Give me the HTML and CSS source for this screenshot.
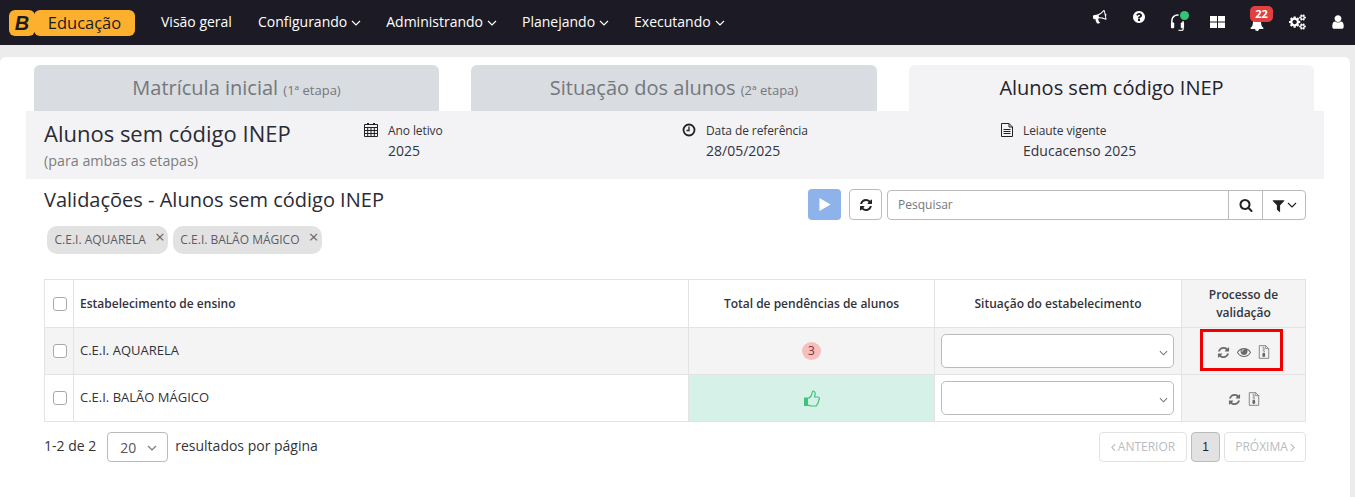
FILE: index.html
```html
<!DOCTYPE html>
<html lang="pt-BR">
<head>
<meta charset="utf-8">
<title>Alunos sem código INEP</title>
<link rel="stylesheet" href="styles.css">
</head>
<body>
<svg class="defs" xmlns="http://www.w3.org/2000/svg">
  <symbol id="i-refresh" viewBox="0 0 1792 1792"><path d="M1639 1056q0 5-1 7-64 268-268 434.500t-478 166.500q-146 0-282.500-55t-243.500-157l-129 129q-19 19-45 19t-45-19-19-45v-448q0-26 19-45t45-19h448q26 0 45 19t19 45-19 45l-137 137q71 66 161 102t187 36q134 0 250-65t186-179q11-17 53-117 8-23 30-23h192q13 0 22.500 9.500t9.500 22.500zm25-800v448q0 26-19 45t-45 19h-448q-26 0-45-19t-19-45 19-45l138-138q-148-137-349-137-134 0-250 65t-186 179q-11 17-53 117-8 23-30 23h-199q-13 0-22.500-9.500t-9.500-22.500v-7q65-268 270-434.500t480-166.500q146 0 284 55.500t245 156.500l130-129q19-19 45-19t45 19 19 45z"/></symbol>
  <symbol id="i-zip" viewBox="0 0 14 16"><path fill="none" stroke="currentColor" stroke-width=".9" d="M1.500 .6h7.500l3.500 3.500v11.300h-11z"/><path fill="none" stroke="currentColor" stroke-width=".8" d="M9 .6v3.500h3.500"/><path d="M5.500 2h1.200v1h-1.200zM6.800 3h1.200v1h-1.200zM5.500 4h1.200v1h-1.200zM6.800 5h1.200v1h-1.200zM5.500 6h1.200v1h-1.200zM6.800 7h1.200v1h-1.200zM5.500 9h2.500l.5 3.500a1.800 1.800 0 0 1-3.500 0z"/></symbol>
  <symbol id="i-chev" viewBox="0 0 10 6"><path fill="none" stroke="currentColor" stroke-width="1.200" d="M1 1l4 4 4-4"/></symbol>
  <symbol id="i-left" viewBox="0 0 6 10"><path fill="none" stroke="currentColor" stroke-width="1.300" d="M5 1L1 5l4 4"/></symbol>
  <symbol id="i-right" viewBox="0 0 6 10"><path fill="none" stroke="currentColor" stroke-width="1.300" d="M1 1l4 4-4 4"/></symbol>
</svg>

<header class="navbar">
  <div class="logo"><span class="logo-b">B</span><span class="logo-name">Educação</span></div>
  <nav class="menu">
    <a class="menu-item first">Visão geral</a>
    <a class="menu-item">Configurando <svg class="caret"><use href="#i-chev"/></svg></a>
    <a class="menu-item">Administrando <svg class="caret"><use href="#i-chev"/></svg></a>
    <a class="menu-item">Planejando <svg class="caret"><use href="#i-chev"/></svg></a>
    <a class="menu-item">Executando <svg class="caret"><use href="#i-chev"/></svg></a>
  </nav>
  <div class="tools">
    <span class="tool t-horn"><svg viewBox="0 0 1792 1792" class="ic14 tilt"><path d="M1664 640q53 0 90.500 37.500t37.500 90.500-37.500 90.500-90.500 37.500v384q0 52-38 90t-90 38q-417-347-812-380-58 19-91 66t-31 100.500 40 92.500q-20 33-23 65.500t6 58 33.500 55 48 50 61.500 50.500q-29 58-111.500 83t-168.500 11.500-132-55.500q-7-23-29.500-87.500t-32-94.500-23-89-15-101 3.500-98.500 22-110.500h-122q-66 0-113-47t-47-113v-192q0-66 47-113t113-47h480q435 0 896-384 52 0 90 38t38 90v384zm-128 604v-954q-394 302-768 343v270q377 42 768 341z"/></svg></span>
    <span class="tool t-help"><svg viewBox="0 0 1792 1792" class="ic14"><path d="M1024 1376v-192q0-14-9-23t-23-9h-192q-14 0-23 9t-9 23v192q0 14 9 23t23 9h192q14 0 23-9t9-23zm256-672q0-88-55.500-163t-138.500-116-170-41q-243 0-371 213-15 24 8 42l132 100q7 6 19 6 16 0 25-12 53-68 86-92 34-24 86-24 48 0 85.500 26t37.500 59q0 38-20 61t-68 45q-63 28-115.500 86.500t-52.500 125.500v36q0 14 9 23t23 9h192q14 0 23-9t9-23q0-19 21.500-49.500t54.500-49.500q32-18 49-28.500t46-35 44.500-48 28-60.500 12.500-81zm384 192q0 209-103 385.500t-279.500 279.500-385.500 103-385.500-103-279.500-279.500-103-385.500 103-385.500 279.500-279.500 385.500-103 385.500 103 279.500 279.500 103 385.500z"/></svg></span>
    <span class="tool t-head"><svg viewBox="0 0 16 18" class="headset"><path fill="none" stroke="#fff" stroke-width="1.600" d="M2 10V7a6 6 0 0 1 12 0v3"/><rect x="1" y="9" width="3.500" height="6" rx="1" fill="#fff"/><rect x="11.500" y="9" width="3.500" height="6" rx="1" fill="#fff"/><path fill="none" stroke="#ddd" stroke-width="1.600" d="M14 14v2a1.500 1.500 0 0 1-1.500 1.500h-3.500"/></svg><i class="dot"></i></span>
    <span class="tool t-grid"><svg viewBox="0 0 15 12" class="grid"><path fill="#fff" d="M0 0h7v5.500H0zM8 0h7v5.500H8zM0 6.500h7V12H0zM8 6.500h7V12H8z"/></svg></span>
    <span class="tool t-bell"><svg viewBox="0 0 1792 1792" class="ic14"><path d="M912 1696q0-16-16-16-59 0-101.500-42.500t-42.500-101.500q0-16-16-16t-16 16q0 73 51.500 124.500t124.500 51.500q16 0 16-16zm816-288q0 52-38 90t-90 38h-448q0 106-75 181t-181 75-181-75-75-181h-448q-52 0-90-38t-38-90q50-42 91-88t85-119.500 74.500-158.500 50-206 19.500-260q0-152 117-282.500t307-158.500q-8-19-8-39 0-40 28-68t68-28 68 28 28 68q0 20-8 39 190 28 307 158.500t117 282.500q0 139 19.500 260t50 206 74.500 158.500 85 119.500 91 88z"/></svg><b class="count">22</b></span>
    <span class="tool t-cogs"><svg viewBox="0 0 2048 1792" class="cogs"><path d="M896 896q0-106-75-181t-181-75-181 75-75 181 75 181 181 75 181-75 75-181zm768 512q0-52-38-90t-90-38-90 38-38 90q0 53 37.500 90.500t90.500 37.500 90.500-37.500 37.500-90.500zm0-1024q0-52-38-90t-90-38-90 38-38 90q0 53 37.500 90.500t90.500 37.500 90.500-37.500 37.500-90.500zm-384 421v185q0 10-7 19.500t-16 10.500l-155 24q-11 35-32 76 34 48 90 115 7 11 7 20 0 12-7 19-23 30-82.500 89.500t-78.500 59.500q-11 0-21-7l-115-90q-37 19-77 31-11 108-23 155-7 24-30 24h-186q-11 0-20-7.500t-10-17.500l-23-153q-34-10-75-31l-118 89q-7 7-20 7-11 0-21-8-144-133-144-160 0-9 7-19 10-14 41-53t47-61q-23-44-35-82l-152-24q-10-1-17-9.500t-7-19.500v-185q0-10 7-19.500t16-10.500l155-24q11-35 32-76-34-48-90-115-7-11-7-20 0-12 7-20 22-30 82-89t79-59q11 0 21 7l115 90q34-18 77-32 11-108 23-154 7-24 30-24h186q11 0 20 7.500t10 17.500l23 153q34 10 75 31l118-89q8-7 20-7 11 0 21 8 144 133 144 160 0 8-7 19-12 16-42 54t-45 60q23 48 34 82l152 23q10 2 17 10.500t7 19.500zm640 533v140q0 16-149 31-12 27-30 52 51 113 51 138 0 4-4 7-122 71-124 71-8 0-46-47t-52-68q-20 2-30 2t-30-2q-14 21-52 68t-46 47q-2 0-124-71-4-3-4-7 0-25 51-138-18-25-30-52-149-15-149-31v-140q0-16 149-31 13-29 30-52-51-113-51-138 0-4 4-7 4-2 35-20t59-34 30-16q8 0 46 46.500t52 67.500q20-2 30-2t30 2q51-71 92-112l6-2q4 0 124 70 4 3 4 7 0 25-51 138 17 23 30 52 149 15 149 31zm0-1024v140q0 16-149 31-12 27-30 52 51 113 51 138 0 4-4 7-122 71-124 71-8 0-46-47t-52-68q-20 2-30 2t-30-2q-14 21-52 68t-46 47q-2 0-124-71-4-3-4-7 0-25 51-138-18-25-30-52-149-15-149-31v-140q0-16 149-31 13-29 30-52-51-113-51-138 0-4 4-7 4-2 35-20t59-34 30-16q8 0 46 46.500t52 67.500q20-2 30-2t30 2q51-71 92-112l6-2q4 0 124 70 4 3 4 7 0 25-51 138 17 23 30 52 149 15 149 31z"/></svg></span>
    <span class="tool t-user"><svg viewBox="0 0 1792 1792" class="user"><path d="M1536 1399q0 109-62.500 187t-150.500 78h-854q-88 0-150.500-78t-62.500-187q0-85 8.500-160.500t31.500-152 58.500-131 94-89 134.500-34.500q131 128 313 128t313-128q76 0 134.500 34.500t94 89 58.500 131 31.500 152 8.500 160.500zm-256-887q0 159-112.500 271.500t-271.500 112.500-271.500-112.500-112.500-271.500 112.500-271.500 271.500-112.500 271.500 112.500 112.500 271.500z"/></svg></span>
  </div>
</header>

<main class="card">
  <div class="tabs">
    <div class="tab">Matrícula inicial <small>(1ª etapa)</small></div>
    <div class="tab wide">Situação dos alunos <small>(2ª etapa)</small></div>
    <div class="tab active">Alunos sem código INEP</div>
  </div>

  <section class="band">
    <div class="band-title">
      <h1>Alunos sem código INEP</h1>
      <p>(para ambas as etapas)</p>
    </div>
    <div class="meta m1">
      <svg viewBox="0 0 14 14" class="meta-ic"><path d="M3 0h2v2H3zM9 0h2v2H9z"/><path fill="none" stroke="currentColor" d="M.5 1.500h13v12H.5zM.5 4.500h13M.5 7.500h13M.5 10.500h13M3.700 4.500v9M7 4.500v9M10.300 4.500v9"/></svg>
      <div><span class="meta-label">Ano letivo</span><span class="meta-value">2025</span></div>
    </div>
    <div class="meta m2">
      <svg viewBox="0 0 14 14" class="meta-ic"><circle cx="7" cy="7" r="5.500" fill="none" stroke="currentColor" stroke-width="1.800"/><path fill="none" stroke="currentColor" stroke-width="1.300" d="M7 3.500V7.500H4.500"/></svg>
      <div><span class="meta-label">Data de referência</span><span class="meta-value">28/05/2025</span></div>
    </div>
    <div class="meta m3">
      <svg viewBox="0 0 12 14" class="meta-ic"><path fill="none" stroke="currentColor" d="M.5.500h7.500l3.500 3.500v9.500H.5zM8 .5V4h3.500M2.500 6.500h7M2.500 8.500h7M2.500 10.500h7"/></svg>
      <div><span class="meta-label">Leiaute vigente</span><span class="meta-value">Educacenso 2025</span></div>
    </div>
  </section>

  <section class="content">
    <div class="head-row">
      <div class="head-left">
        <h2>Validações - Alunos sem código INEP</h2>
        <div class="chips">
          <span class="chip">C.E.I. AQUARELA<i class="chip-x">×</i></span>
          <span class="chip">C.E.I. BALÃO MÁGICO<i class="chip-x">×</i></span>
        </div>
      </div>
      <div class="actions">
        <button class="btn-play"><svg viewBox="0 0 12 14" class="play"><path fill="#fff" d="M0 0l12 7-12 7z"/></svg></button>
        <button class="btn-sync"><svg class="ic14"><use href="#i-refresh"/></svg></button>
        <div class="search">
          <span class="search-input">Pesquisar</span>
          <span class="search-btn"><svg viewBox="0 0 1792 1792" class="ic14"><path d="M1216 832q0-185-131.500-316.500t-316.500-131.500-316.500 131.500-131.500 316.500 131.500 316.500 316.500 131.500 316.500-131.500 131.500-316.500zm512 832q0 52-38 90t-90 38q-54 0-90-38l-343-342q-179 124-399 124-143 0-273.500-55.500t-225-150-150-225-55.500-273.500 55.500-273.500 150-225 225-150 273.500-55.500 273.500 55.500 225 150 150 225 55.500 273.500q0 220-124 399l343 343q37 37 37 90z"/></svg></span>
          <span class="filter-btn"><svg viewBox="0 0 1792 1792" class="ic14"><path d="M1595 295q17 41-14 70l-493 493v742q0 42-39 59-13 5-25 5-27 0-45-19l-256-256q-19-19-19-45v-486l-493-493q-31-29-14-70 17-39 59-39h1280q42 0 59 39z"/></svg><svg class="caret dark"><use href="#i-chev"/></svg></span>
        </div>
      </div>
    </div>

    <table class="grid-table">
      <thead>
        <tr class="r-head">
          <th class="c-check"><span class="check"></span></th>
          <th class="c-name">Estabelecimento de ensino</th>
          <th class="c-total">Total de pendências de alunos</th>
          <th class="c-sit">Situação do estabelecimento</th>
          <th class="c-proc tint">Processo de validação</th>
        </tr>
      </thead>
      <tbody>
        <tr class="r-one">
          <td class="c-check"><span class="check"></span></td>
          <td class="c-name"><span class="cell-text">C.E.I. AQUARELA</span></td>
          <td class="c-total"><span class="pill">3</span></td>
          <td class="c-sit"><span class="select"><svg class="sel-caret"><use href="#i-chev"/></svg></span></td>
          <td class="c-proc tint mark-cell">
            <span class="row-icons">
              <svg class="ic-sm"><use href="#i-refresh"/></svg>
              <svg viewBox="0 0 1792 1792" class="ic-eye"><path d="M1664 960q-152-236-381-353 61 104 61 225 0 185-131.500 316.500t-316.500 131.500-316.500-131.500-131.500-316.500q0-121 61-225-229 117-381 353 133 205 333.500 326.500t434.500 121.500 434.500-121.500 333.500-326.500zm-720-384q0-20-14-34t-34-14q-125 0-214.500 89.500t-89.500 214.500q0 20 14 34t34 14 34-14 14-34q0-86 61-147t147-61q20 0 34-14t14-34zm848 384q0 34-20 69-140 230-376.500 368.500t-499.500 138.500-499.500-139-376.500-368q-20-35-20-69t20-69q140-229 376.500-368t499.500-139 499.500 139 376.500 368q20 35 20 69z"/></svg>
              <svg class="ic-zip"><use href="#i-zip"/></svg>
            </span>
            <span class="redbox"></span>
          </td>
        </tr>
        <tr>
          <td class="c-check"><span class="check"></span></td>
          <td class="c-name"><span class="cell-text">C.E.I. BALÃO MÁGICO</span></td>
          <td class="c-total ok"><svg viewBox="0 0 16 17" class="thumb"><path fill="#3cc47c" d="M0 7.500h4v8.500H0z"/><path fill="none" stroke="#3cc47c" stroke-width="1.200" d="M4 8c2 0 3.500-2.500 4-4.500.3-1 .3-2.500 1-2.500 1.500 0 2.200 1.500 2.200 3 0 1-.5 2-.7 3h3.500c1 0 1.500.8 1.400 1.600-.1 1-.7 1.400-.7 1.400s.3 1.500-.6 2.200c0 0 .1 1.500-1 2 0 0 0 1.800-2 1.800H8c-2 0-2.500-.6-4-.9"/></svg></td>
          <td class="c-sit"><span class="select"><svg class="sel-caret"><use href="#i-chev"/></svg></span></td>
          <td class="c-proc tint">
            <span class="row-icons">
              <svg class="ic-sm"><use href="#i-refresh"/></svg>
              <svg class="ic-zip"><use href="#i-zip"/></svg>
            </span>
          </td>
        </tr>
      </tbody>
    </table>

    <div class="pager">
      <span class="range">1-2 de 2</span>
      <span class="per-page">20<svg class="pp-caret"><use href="#i-chev"/></svg></span>
      <span class="range">resultados por página</span>
      <div class="pages">
        <span class="page-btn"><svg class="pg-arrow"><use href="#i-left"/></svg>ANTERIOR</span>
        <span class="page-num">1</span>
        <span class="page-btn next">PRÓXIMA<svg class="pg-arrow"><use href="#i-right"/></svg></span>
      </div>
    </div>
  </section>
</main>
</body>
</html>
```

FILE: styles.css
```css
* { box-sizing: border-box; }
html, body { margin: 0; height: 100%; }
body {
  background: #ececec;
  font-family: "Open Sans", "Noto Sans", sans-serif;
  color: #2b2b33;
  overflow: hidden;
}
.defs { display: none; }
svg { fill: currentColor; display: block; }

/* navbar */
.navbar {
  height: 45px;
  background: #1c1b25;
  color: #fff;
  display: flex;
  align-items: center;
  padding-left: 9px;
}
.logo { display: flex; height: 26px; width: 126px; }
.logo-b {
  width: 26px;
  background: #fdb02e;
  border-radius: 6px;
  color: #1c1b25;
  font: italic 700 20px/26px "Liberation Sans", sans-serif;
  text-align: center;
}
.logo-name {
  flex: 1;
  background: #fdb02e;
  border-radius: 6px;
  color: #1c1b25;
  font-size: 16.500px;
  font-weight: 400;
  line-height: 25px;
  text-align: center;
  margin-left: -1px;
}
.menu { display: flex; margin-left: 26px; gap: 25px; padding-bottom: 2px; }
.menu-item { font-size: 14px; line-height: 20px; display: flex; align-items: center; gap: 4px; color: #fff; }
.menu-item.first { margin-right: 1px; }
.caret { width: 10px; height: 6px; margin-top: 2px; }
.caret.dark { color: #222; width: 10px; margin: 0; }
.tools { margin-left: auto; position: relative; width: 270px; height: 45px; }
.tool { position: absolute; top: 0; height: 45px; display: flex; align-items: center; }
.ic14 { width: 14px; height: 14px; }
.tilt { transform: rotate(-12deg); }
.t-horn { left: 8px; top: -6px; }
.t-help { left: 47px; top: -6px; }
.t-head { left: 85px; top: 0; }
.headset { width: 15px; height: 17px; }
.dot {
  position: absolute; left: 10px; top: 11px; width: 9px; height: 9px;
  background: #35c374; border-radius: 50%; box-shadow: 0 0 0 1.500px #1c1b25;
}
.t-grid { left: 125px; top: -1px; }
.grid { width: 15px; height: 12px; }
.t-bell { left: 165px; top: 1px; }
.count {
  position: absolute; left: 0; top: 5px; width: 23px; height: 16px;
  background: #e04040; border-radius: 5px; color: #fff;
  font-size: 11px; line-height: 16px; text-align: center;
}
.t-cogs { left: 204px; top: -1px; }
.cogs { width: 18px; height: 16px; }
.t-user { left: 245px; top: -1px; }
.user { width: 16px; height: 16px; }

/* card */
.card {
  width: 1350px;
  margin-top: 12px;
  background: #fff;
  border-radius: 6px 6px 0 0;
  padding-top: 8px;
  height: 440px;
}
.tabs { display: flex; gap: 32px; padding: 0 36px 0 34px; }
.tab {
  width: 405px;
  height: 46px;
  background: #d9dce1;
  border-radius: 6px 6px 0 0;
  color: #74777c;
  font-size: 20px;
  line-height: 46px;
  text-align: center;
}
.tab.wide { width: 406px; }
.tab small { font-size: 13px; }
.tab.active { background: #f3f3f6; color: #23232b; }
.band {
  margin: 0 26px;
  height: 68px;
  background: #f3f3f6;
  position: relative;
  display: flex;
  padding: 7px 0 0 18px;
}
.band-title { width: 320px; }
h1 { margin: 0; font-size: 22px; font-weight: 400; line-height: 30px; }
.band-title p { margin: 4px 0 0; font-size: 14.300px; line-height: 18px; color: #7c7d80; }
.meta { display: flex; gap: 10px; align-items: flex-start; padding-top: 5px; }
.meta-ic { width: 14px; height: 14px; color: #222; }
.meta-label { display: block; font-size: 12px; line-height: 16px; color: #33333a; letter-spacing: -.1px; }
.meta-value { display: block; font-size: 14px; line-height: 20px; margin-top: 2px; color: #33333a; }
.m1 { width: 318px; }
.m2 { width: 319px; }
.m3 { width: 200px; }
.m3 .meta-ic { width: 12px; }

/* content */
.content { padding: 0 44px; }
.head-row { display: flex; justify-content: space-between; height: 100px; }
h2 { margin: 8px 0 0; font-size: 20px; font-weight: 400; line-height: 26px; }
.chips { display: flex; gap: 5px; margin: 13px 0 0 3px; }
.chip {
  position: relative;
  height: 28px;
  background: #e2e2e2;
  border-radius: 10px;
  padding: 0 22px 0 7.500px;
  font-size: 12px;
  line-height: 28px;
  color: #5c5c66;
}
.chip-x { position: absolute; right: 3px; top: -3px; font-style: normal; font-size: 17px; color: #666; }
.actions { display: flex; align-items: flex-start; padding-top: 10px; }
.btn-play {
  width: 33px; height: 31px; padding: 0; border: 0; border-radius: 4px;
  background: #8eb3ea; display: flex; align-items: center; justify-content: center;
}
.play { width: 12px; height: 13px; }
.btn-sync {
  width: 33px; height: 31px; margin: 0 5px 0 8px; padding: 0;
  background: #fff; border: 1px solid #bbb; border-radius: 4px;
  display: flex; align-items: center; justify-content: center; color: #222;
}
.search { display: flex; width: 419px; height: 30px; margin-top: 1px; border: 1px solid #bbb; border-radius: 4px; }
.search-input { flex: 1; padding-left: 10px; font-size: 12px; line-height: 28px; color: #74777c; }
.search-btn, .filter-btn {
  display: flex; align-items: center; justify-content: center; gap: 1px;
  border-left: 1px solid #bbb; color: #222;
}
.search-btn { width: 34px; }
.search-btn .ic14 { width: 14px; height: 14px; }
.filter-btn { width: 43px; }
.filter-btn .ic14 { width: 15px; height: 15px; }

/* table */
.grid-table { border-collapse: collapse; width: 1262px; table-layout: fixed; font-size: 12px; }
th, td { border: 1px solid #e3e3e3; padding: 0 6px; }
.grid-table th { font-weight: 600; color: #33333a; line-height: 18px; }
.r-head { height: 48px; }
tbody tr { height: 47px; }
.r-one td { background: #f4f4f4; }
.c-check { width: 29px; text-align: center; padding: 0; }
.c-name { text-align: left; }
.cell-text { display: block; font-size: 13px; line-height: 18px; margin-top: -2px; color: #33333a; }
.c-total { width: 246px; text-align: center; }
.c-sit { width: 247px; text-align: center; }
.c-sit .select { margin-right: 1px; }
.c-proc { width: 124px; text-align: center; }
.tint { background: #f4f4f4; }
.check {
  display: block; width: 14px; height: 14px; margin: 0 auto; position: relative; left: 1px;
  background: #fff; border: 1px solid #aaa; border-radius: 3px;
}
.pill {
  display: inline-block; width: 19px; height: 18px; border-radius: 50%;
  background: #f5bfbd; color: #8f2c2a; line-height: 18px; font-size: 12px; text-align: center;
}
.ok { background: #d6f2e8; }
.thumb { width: 16px; height: 17px; margin: 0 auto; }
.select {
  display: block; position: relative; height: 34px;
  background: #fff; border: 1px solid #bbb; border-radius: 5px;
}
.sel-caret { position: absolute; right: 5px; top: 15px; width: 9px; height: 6px; color: #777; }
.row-icons { display: inline-flex; align-items: center; gap: 7px; color: #6a6a6a; vertical-align: middle; }
.ic-sm { width: 13px; height: 13px; }
.ic-eye { width: 14px; height: 14px; }
.ic-zip { width: 12px; height: 14px; }
.mark-cell { position: relative; }
.redbox {
  position: absolute; left: 18px; top: 1px; width: 83px; height: 42px;
  border: 3px solid #f00000;
}

/* pager */
.pager { display: flex; align-items: center; margin-top: 10px; height: 30px; font-size: 14px; }
.range { color: #33333a; margin-top: -3px; }
.per-page {
  position: relative; width: 61px; height: 30px; margin: 0 7px 0 11px; padding: 3px 0 0 12px;
  border: 1px solid #bbb; border-radius: 4px; line-height: 24px; color: #55555c;
}
.pp-caret { position: absolute; right: 10px; top: 12px; width: 10px; height: 6px; color: #777; }
.pages { margin-left: auto; display: flex; gap: 4px; }
.page-btn {
  height: 30px; width: 88px;
  display: flex; align-items: center; justify-content: center; gap: 2px;
  border: 1px solid #e2e2e2; border-radius: 4px;
  font-size: 12px; line-height: 28px; color: #b9bcc0;
}
.page-btn.next { width: 82px; }
.pg-arrow { width: 5px; height: 9px; }
.page-num {
  width: 29px; height: 30px; background: #e2e2e2; border: 1px solid #bbb; border-radius: 4px;
  font: 12px/28px "Liberation Sans", sans-serif; text-align: center; color: #222;
}
```
